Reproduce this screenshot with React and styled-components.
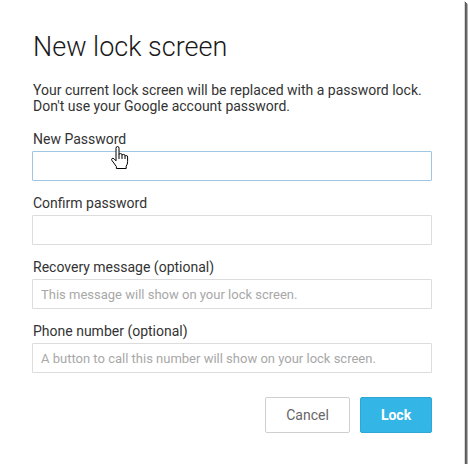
import React from "react";
import styled, { createGlobalStyle } from "styled-components";

const Global = createGlobalStyle`
  html, body {
    margin: 0;
    padding: 0;
    background: #fff;
  }
  body {
    font-family: Roboto, "Noto Sans", Arial, sans-serif;
  }
`;

const Dialog = styled.div`
  position: relative;
  width: 464px;
  height: 464px;
  box-sizing: border-box;
  padding: 32px 32px 0 32px;
  background: #fff;
  box-shadow: 1px 1px 0 #d8d8d8, 2px 2px 0 #5a5a5a, 3px 3px 0 #6a6a6a,
    4px 4px 1px rgba(0, 0, 0, 0.3);
`;

const Title = styled.h1`
  margin: 0;
  font-size: 27px;
  line-height: 31px;
  font-weight: 300;
  color: #1a1a1a;
  padding-left: 1px;
`;

const Intro = styled.p`
  margin: 19px 0 0 0;
  font-size: 14px;
  line-height: 16px;
  color: #333;
  padding-left: 1px;
`;

const Fields = styled.div`
  display: flex;
  flex-direction: column;
  gap: 14px;
  margin-top: 17px;
`;

const Field = styled.label`
  display: flex;
  flex-direction: column;
  gap: 4px;
`;

const Label = styled.span`
  font-size: 14px;
  line-height: 16px;
  color: #333;
  padding-left: 1px;
`;

const Input = styled.input`
  box-sizing: border-box;
  width: 400px;
  height: 30px;
  margin: 0;
  padding: 0 8px;
  border: 1px solid ${(p) => (p.$focused ? "#9fc6e0" : "#dcdcdc")};
  border-radius: 1px;
  font-family: Roboto, Arial, sans-serif;
  font-size: 13px;
  color: #333;
  outline: none;
  &::placeholder {
    color: #a8a8a8;
  }
`;

const Actions = styled.div`
  display: flex;
  justify-content: flex-end;
  gap: 10px;
  margin-top: 24px;
`;

const Button = styled.button`
  box-sizing: border-box;
  height: 36px;
  min-width: ${(p) => (p.$primary ? "72px" : "85px")};
  padding: 0 16px;
  border-radius: 2px;
  border: 1px solid ${(p) => (p.$primary ? "#2ea6d6" : "#cfcfcf")};
  background: ${(p) => (p.$primary ? "#33b5e5" : "#fff")};
  color: ${(p) => (p.$primary ? "#fff" : "#666")};
  font-family: Roboto, Arial, sans-serif;
  font-size: 14px;
  font-weight: ${(p) => (p.$primary ? 700 : 400)};
  cursor: pointer;
`;

const Cursor = styled.svg`
  position: absolute;
  left: 111px;
  top: 146px;
  pointer-events: none;
`;

function HandCursor() {
  return (
    <Cursor width="18" height="24" viewBox="0 0 18 24">
      <path
        d="M5 2.2 Q5 0.5 6.5 0.5 Q8 0.5 8 2.2 V8.6 Q8 7.6 9.5 7.6 Q11 7.6 11 8.8 V9.4 Q11 8.4 12.5 8.4 Q14 8.4 14 9.8 V10.4 Q14 9.5 15.3 9.5 Q16.6 9.5 16.6 11 V15.6 Q16.6 18.4 15.2 20.2 V22.5 H5.4 V20.6 Q4.4 19.2 2.8 17 L0.9 14.4 Q0.1 13.2 1.1 12.5 Q2.1 11.9 3.1 12.9 L5 14.8 Z"
        fill="#fff"
        stroke="#000"
        strokeWidth="1"
        strokeLinejoin="round"
      />
      <path d="M8 8.6 V13 M11 9.4 V13 M14 10.4 V13" stroke="#000" strokeWidth="1" fill="none" />
    </Cursor>
  );
}

export default function App() {
  return (
    <>
      <Global />
      <Dialog>
        <Title>New lock screen</Title>
        <Intro>
          Your current lock screen will be replaced with a password lock.
          <br />
          Don't use your Google account password.
        </Intro>
        <Fields>
          <Field>
            <Label>New Password</Label>
            <Input type="password" $focused />
          </Field>
          <Field>
            <Label>Confirm password</Label>
            <Input type="password" />
          </Field>
          <Field>
            <Label>Recovery message (optional)</Label>
            <Input placeholder="This message will show on your lock screen." />
          </Field>
          <Field>
            <Label>Phone number (optional)</Label>
            <Input placeholder="A button to call this number will show on your lock screen." />
          </Field>
        </Fields>
        <Actions>
          <Button>Cancel</Button>
          <Button $primary>Lock</Button>
        </Actions>
        <HandCursor />
      </Dialog>
    </>
  );
}
